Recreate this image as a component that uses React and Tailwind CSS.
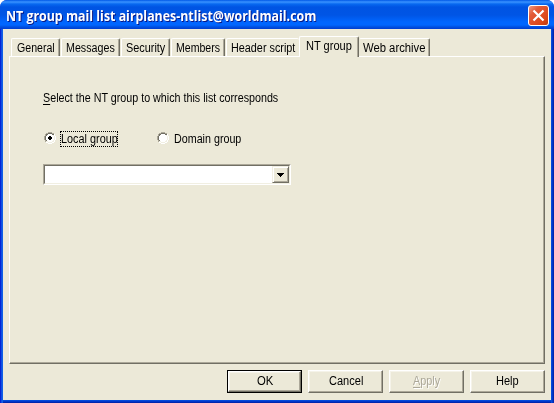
import { useLayoutEffect, useRef, useState } from "react";

// Condenses a run of text so that it fills its box from edge to edge.
function Fit({ className, children }) {
  const box = useRef(null);
  const run = useRef(null);
  const [scale, setScale] = useState(1);
  useLayoutEffect(() => {
    const natural = run.current.offsetWidth;
    if (natural) setScale(box.current.offsetWidth / natural);
  }, []);
  return (
    <span ref={box} className={"block shrink-0 whitespace-nowrap " + className}>
      <span ref={run} className="inline-block origin-left" style={{ transform: `scaleX(${scale})` }}>
        {children}
      </span>
    </span>
  );
}

function Tab({ box, text, label, active }) {
  return (
    <div
      className={
        "shrink-0 rounded-t-[2px] border-t border-l border-white " +
        (active ? "relative -mb-px h-[21px] bg-[#ece9d8] pt-[1px] " : "h-[18px] pt-[1px] ") +
        box
      }
    >
      <Fit className={text}>{label}</Fit>
    </div>
  );
}

const edge = "border-r border-r-[#716f64] shadow-[inset_-1px_0_0_#aca899]";

function Button({ children, isDefault }) {
  return (
    <div className={"h-[23px] w-[75px] " + (isDefault ? "border border-black" : "")}>
      <div className="flex h-full w-full justify-center border border-t-white border-l-white border-r-[#716f64] border-b-[#716f64] shadow-[inset_-1px_-1px_0_#aca899,inset_1px_1px_0_#f5f3e9]">
        <div className={isDefault ? "pt-[1px]" : "pt-[2px]"}>{children}</div>
      </div>
    </div>
  );
}

function Radio({ checked }) {
  return (
    <svg width="12" height="12" viewBox="0 0 12 12" shapeRendering="crispEdges" className="shrink-0">
      <path fill="#fff" d="M4 1h4v1h2v2h1v4h-1v2H8v1H4v-1H2V8H1V4h1V2h2z" />
      <path fill="#aca899" d="M4 0h4v1H4zM2 1h2v1H2zM8 1h2v1H8zM1 2h1v2H1zM0 4h1v4H0zM1 8h1v2H1z" />
      <path fill="#716f64" d="M4 1h4v1H4zM2 2h2v1H2zM8 2h2v1H8zM2 3h1v1H2zM1 4h1v4H1zM2 8h1v1H2z" />
      <path fill="#f1efe2" d="M9 3h1v1H9zM10 4h1v4h-1zM9 8h1v1H9zM2 9h2v1H2zM8 9h2v1H8zM4 10h4v1H4z" />
      <path fill="#fff" d="M10 2h1v2h-1zM11 4h1v4h-1zM10 8h1v2h-1zM2 10h2v1H2zM8 10h2v1H8zM4 11h4v1H4z" />
      {checked && <path fill="#000" d="M5 4h2v1h1v2H7v1H5V7H4V5h1z" />}
    </svg>
  );
}

export default function App() {
  return (
    <div className="h-[403px] w-[554px] overflow-hidden bg-white font-['Liberation_Sans',Arial,sans-serif] text-[12px] leading-[16px] text-black">
      <div className="flex h-full w-full flex-col overflow-hidden rounded-t-[7px] bg-[#0831d9]">
        <div className="flex h-[29px] shrink-0 items-start justify-between bg-[linear-gradient(to_bottom,#0058e6_0px,#3a93ff_2px,#0869f0_4px,#0054e3_7px,#0055e5_15px,#0066ff_22px,#0066ff_25px,#0050e0_27px,#003dd0_29px)] pr-[5px] pl-[6px]">
          <div className="pt-[6px] font-['Open_Sans','Noto_Sans',sans-serif] text-[13.5px] leading-[20px] font-bold text-white [text-shadow:1px_1px_0_#0a1883]">
            <Fit className="w-[310px]">NT group mail list airplanes-ntlist@worldmail.com</Fit>
          </div>
          <svg width="21" height="21" viewBox="0 0 21 21" className="mt-[5px]">
            <defs>
              <linearGradient id="close" x1="0" y1="0" x2="1" y2="1">
                <stop offset="0" stopColor="#f0a088" />
                <stop offset="0.3" stopColor="#e35b38" />
                <stop offset="0.75" stopColor="#dc4718" />
                <stop offset="1" stopColor="#b83a10" />
              </linearGradient>
            </defs>
            <rect x="0.5" y="0.5" width="20" height="20" rx="2.5" fill="url(#close)" stroke="#fff" />
            <path d="M5.5 5.5l10 10M15.5 5.5l-10 10" stroke="#fff" strokeWidth="2.2" />
          </svg>
        </div>

        <div className="flex min-h-0 flex-1 bg-[linear-gradient(to_bottom,#0855dd_0px,#0855dd_371px,#0040d8_372px,#001ea0_374px)]">
          <div className="w-[3px] shrink-0 bg-[linear-gradient(to_right,#0019cf,#0831d9_1px,#166aee_2px,#0855dd_3px)]" />
          <div className="flex h-[371px] w-[548px] shrink-0 flex-col bg-[#ece9d8] pt-[7px] pl-[6px]">
            <div className="flex h-[20px] items-end pl-[2px]">
              <Tab box={"w-[49px] pl-[5px] " + edge} text="w-[38px]" label="General" />
              <Tab box={"ml-px w-[59px] pl-[4px] " + edge} text="w-[49px]" label="Messages" />
              <Tab box={"ml-px w-[49px] pl-[4px] " + edge} text="w-[39px]" label="Security" />
              <Tab box={"ml-px w-[54px] pl-[4px] " + edge} text="w-[44px]" label="Members" />
              <Tab box="ml-px w-[73px] pl-[4px]" text="w-[64px]" label="Header script" />
              <Tab active box={"w-[60px] pl-[6px] " + edge} text="w-[46px]" label="NT group" />
              <Tab box={"w-[71px] border-l-[#ece9d8] pl-[3px] " + edge} text="w-[62px]" label="Web archive" />
            </div>

            <div className="h-[308px] w-[536px] border border-t-white border-l-white border-r-[#716f64] border-b-[#716f64] pt-[33px] pl-[33px] shadow-[inset_-1px_-1px_0_#aca899]">
              <Fit className="w-[235px]">
                <span className="underline underline-offset-2">S</span>elect the NT group to which this list corresponds
              </Fit>
              <div className="mt-[25px] flex h-[16px] items-start">
                <div className="flex w-[114px] items-start gap-[4px] pl-[1px]">
                  <div className="pt-[1px]"><Radio checked /></div>
                  <div className="h-[16px] w-[58px] border border-dotted border-black">
                    <Fit className="-mt-px w-[57px]">Local group</Fit>
                  </div>
                </div>
                <div className="pt-[1px]"><Radio /></div>
                <Fit className="ml-[5px] w-[67px]">Domain group</Fit>
              </div>
              <div className="mt-[17px] flex h-[21px] w-[248px] border border-t-[#aca899] border-l-[#aca899] border-r-white border-b-white">
                <div className="flex flex-1 justify-end border border-t-[#716f64] border-l-[#716f64] border-r-[#f1efe2] border-b-[#f1efe2] bg-white">
                  <div className="flex h-[17px] w-[17px] items-center justify-center border border-t-[#f1efe2] border-l-[#f1efe2] border-r-[#716f64] border-b-[#716f64] bg-[#ece9d8] shadow-[inset_1px_1px_0_#fff,inset_-1px_-1px_0_#aca899]">
                    <svg width="7" height="4" viewBox="0 0 7 4" shapeRendering="crispEdges">
                      <path d="M0 0h7v1H6v1H5v1H4v1H3V3H2V2H1V1H0z" />
                    </svg>
                  </div>
                </div>
              </div>
            </div>

            <div className="mt-[6px] flex gap-[6px] pl-[218px]">
              <Button isDefault><Fit className="w-[16px]">OK</Fit></Button>
              <Button><Fit className="w-[34px]">Cancel</Fit></Button>
              <Button>
                <div className="text-[#aca899] [text-shadow:1px_1px_0_#fff]">
                  <Fit className="w-[27px]"><span className="underline underline-offset-2">A</span>pply</Fit>
                </div>
              </Button>
              <Button><Fit className="w-[23px]">Help</Fit></Button>
            </div>
          </div>
          <div className="w-[3px] shrink-0 bg-[linear-gradient(to_right,#0855dd,#0040d8_1px,#001ea0_3px)]" />
        </div>
      </div>
    </div>
  );
}
